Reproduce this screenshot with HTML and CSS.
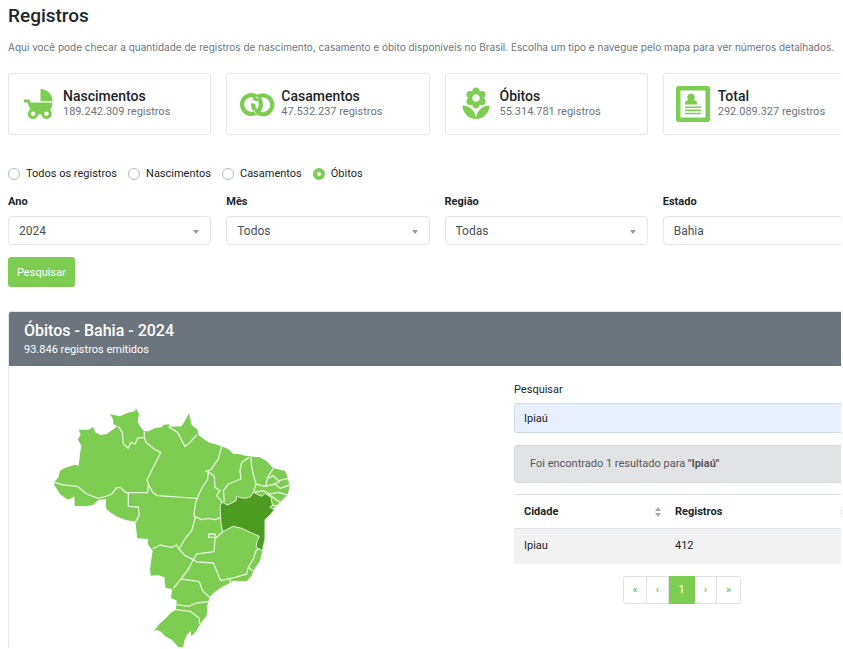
FILE: index.html
```html
<!DOCTYPE html>
<html lang="pt-BR">
<head>
<meta charset="utf-8">
<title>Registros</title>
<link rel="stylesheet" href="styles.css">
</head>
<body>
<main class="page">
<div class="content">
  <h1>Registros</h1>
  <p class="intro">Aqui você pode checar a quantidade de registros de nascimento, casamento e óbito disponíveis no Brasil. Escolha um tipo e navegue pelo mapa para ver números detalhados.</p>

  <section class="grid cards">
    <article class="card">
      <svg class="icon" viewBox="0 0 24 24"><path d="M13 2v8h8c0-4.42-3.580-8-8-8zm6.320 13.890C20.370 14.540 21 12.840 21 11H6.440l-.95-2H2v2h2.220s1.890 4.070 2.120 4.420c-1.100.590-1.840 1.750-1.840 3.080C4.500 20.430 6.070 22 8 22c1.760 0 3.220-1.300 3.460-3h2.080c.24 1.700 1.700 3 3.460 3 1.930 0 3.500-1.570 3.500-3.500 0-1.040-.46-1.970-1.180-2.610zM8 20c-.83 0-1.500-.67-1.500-1.500S7.170 17 8 17s1.500.67 1.500 1.500S8.830 20 8 20zm9 0c-.83 0-1.500-.67-1.500-1.500S16.170 17 17 17s1.500.67 1.500 1.500S17.830 20 17 20z"/></svg>
      <div><h2>Nascimentos</h2><p>189.242.309 registros</p></div>
    </article>
    <article class="card">
      <svg class="icon" viewBox="0 0 36 36"><g fill="none" stroke="#7ccd52" stroke-width="4.200"><circle cx="12.500" cy="18.500" r="9.400"/><path d="M18 26.200A9.400 9.400 0 1 0 15.500 14.500"/><path d="M14.200 17.500a9.400 9.400 0 0 0 3.300 8.300"/></g><path fill="none" stroke="#fff" stroke-width="1" d="M16.800 10.200l2.500 2.800M14.200 24l3 3.500"/></svg>
      <div><h2>Casamentos</h2><p>47.532.237 registros</p></div>
    </article>
    <article class="card">
      <svg class="icon" viewBox="0 0 24 24"><path d="M12 22c4.970 0 9-4.030 9-9-4.970 0-9 4.030-9 9zM5.600 10.250c0 1.380 1.120 2.500 2.500 2.500.53 0 1.010-.16 1.420-.44l-.02.19c0 1.380 1.120 2.500 2.500 2.500s2.500-1.120 2.500-2.500l-.02-.19c.4.280.89.440 1.420.440 1.380 0 2.500-1.120 2.500-2.500 0-1-.59-1.850-1.430-2.250.84-.4 1.430-1.250 1.430-2.250 0-1.380-1.120-2.500-2.500-2.500-.53 0-1.010.16-1.420.440l.02-.19C14.500 2.120 13.380 1 12 1S9.500 2.120 9.500 3.500l.02.19c-.4-.28-.89-.44-1.420-.44-1.380 0-2.500 1.120-2.500 2.500 0 1 .59 1.850 1.430 2.250-.84.400-1.430 1.250-1.430 2.250zM12 5.500c1.380 0 2.500 1.120 2.500 2.500s-1.120 2.500-2.500 2.500S9.500 9.380 9.500 8s1.120-2.500 2.500-2.500zM3 13c0 4.970 4.030 9 9 9 0-4.970-4.030-9-9-9z"/></svg>
      <div><h2>Óbitos</h2><p>55.314.781 registros</p></div>
    </article>
    <article class="card">
      <svg class="icon" viewBox="0 0 36 36"><path fill-rule="evenodd" d="M2.500 0h29A2.500 2.500 0 0 1 34 2.500v31a2.500 2.500 0 0 1-2.500 2.500h-29A2.500 2.500 0 0 1 0 33.500v-31A2.500 2.500 0 0 1 2.500 0zM4.500 4.500v27h25v-27zM9 20.500h16v1.600H9zM9 23.600h16v1.600H9zM9 26.700h16v1.600H9zM9 18.500v-1.700c0-2 1.700-2.800 3.600-2.800a3.700 3.700 0 1 1 4.800 0c1.900 0 3.600.8 3.600 2.800v1.700z"/></svg>
      <div><h2>Total</h2><p>292.089.327 registros</p></div>
    </article>
  </section>

  <form class="filters">
    <fieldset class="types">
      <label><input type="radio" name="tipo">Todos os registros</label>
      <label><input type="radio" name="tipo">Nascimentos</label>
      <label><input type="radio" name="tipo">Casamentos</label>
      <label><input type="radio" name="tipo" checked>Óbitos</label>
    </fieldset>
    <div class="grid">
      <div class="field"><label for="ano">Ano</label><div class="select"><select id="ano"><option>2024</option></select></div></div>
      <div class="field"><label for="mes">Mês</label><div class="select"><select id="mes"><option>Todos</option></select></div></div>
      <div class="field"><label for="regiao">Região</label><div class="select"><select id="regiao"><option>Todas</option></select></div></div>
      <div class="field"><label for="estado">Estado</label><div class="select"><select id="estado"><option>Bahia</option></select></div></div>
    </div>
    <button class="submit" type="button">Pesquisar</button>
  </form>

  <section class="panel">
    <header class="panel-head">
      <h2>Óbitos - Bahia - 2024</h2>
      <p>93.846 registros emitidos</p>
    </header>
    <div class="panel-body">
      <svg class="map" viewBox="0 0 735 735" role="img" aria-label="Mapa do Brasil">
        <path class="land" d="M13 235L25 220 30 200 42 193 55 188 75 182 86 185 90 150 94 125 83 105 92 93 86 77 115 77 130 69 135 85 152 93 170 90 188 77 202 67 190 60 189 45 180 31 210 37 232 27 255 21 258 13 267 30 263 53 270 67 282 82 295 82 315 72 335 70 340 62 357 61 360 68 395 67 405 50 417 28 425 63 443 77 445 93 475 115 510 125 535 135 550 150 565 150 585 155 630 160 650 172 670 193 705 200 713 220 719 247 713 273 690 295 670 315 663 330 645 347 645 405 637 440 630 470 610 500 605 515 590 532 550 530 515 550 495 563 478 580 472 605 470 635 450 660 440 680 424 697 422 682 412 690 403 710 398 735 385 733 382 725 365 707 345 697 335 685 322 678 312 680 328 660 345 645 362 627 378 617 380 590 363 582 367 555 347 552 343 520 325 514 302 515 300 495 308 440 293 420 295 405 262 403 256 353 228 348 205 340 180 325 168 313 168 285 145 288 130 302 110 307 74 305 73 277 60 285 50 285 30 270 13 243z"/>
        <path class="bahia" d="M517 295L533 303 558 290 560 277 580 283 600 280 610 265 635 277 645 268 663 280 667 303 660 310 673 317 663 330 645 347 645 405 637 440 618 430 622 410 628 397 605 387 575 373 550 367 518 383 513 360 510 305z"/>
        <path class="borders" d="M13 235L40 243 82 247 110 270 145 283 168 277 185 270 200 251 212 251 228 266 293 266 295 240 291 228 332 145 315 137 288 115 283 100 263 102 255 120 242 115 235 133 220 120 217 85 205 67M283 100V83M295 240L308 265 322 275 440 283M235 266V307L265 309 267 335 255 357M355 68L383 85 405 128 420 115 440 93M515 127L505 165 483 197 467 203 475 203 473 225 457 250 445 275 437 295 432 330 435 345 425 380 405 405 387 435M475 203L493 217 495 250 510 260 500 275 517 295M597 160L575 175 570 200 573 225 535 240 520 260 523 293M603 160L605 190 615 230 618 240 610 265 640 260 660 270 685 265 713 273M670 193L653 220 647 247M618 240L645 247 675 240 690 253 719 243M650 225L670 215 685 230 715 223M673 240L690 232M655 270L690 295M667 303L680 307M433 337L455 347 475 343 495 347 513 340M308 435L330 423 365 430 380 423 387 435 405 455 430 467 440 450 492 443 495 405 518 383M476 390h19v10h-19zM430 467L440 474 490 477 500 500 512 530 555 520 590 510 595 490 610 465 618 440 628 433M595 490L608 500M538 525L542 535M430 467L415 495 393 525 370 553M393 525L448 533 458 560 478 580M380 602L415 607 440 597 475 593M378 617L420 622 448 643 448 660"/>
      </svg>
      <div class="results">
        <label class="search-label" for="busca">Pesquisar</label>
        <input class="search" id="busca" type="text" value="Ipiaú">
        <p class="notice">Foi encontrado 1 resultado para <strong>"Ipiaú"</strong></p>
        <table>
          <thead><tr>
            <th>Cidade<svg class="sort" viewBox="0 0 6 10"><path d="M3 0l3 4H0zM3 10l3-4H0z"/></svg></th>
            <th>Registros<svg class="sort" viewBox="0 0 6 10"><path d="M3 0l3 4H0zM3 10l3-4H0z"/></svg></th>
          </tr></thead>
          <tbody><tr><td>Ipiau</td><td>412</td></tr></tbody>
        </table>
        <nav class="pager" aria-label="Paginação">
          <a href="#">«</a><a href="#">‹</a><a class="current" href="#">1</a><a href="#">›</a><a href="#">»</a>
        </nav>
      </div>
    </div>
  </section>
</div>
</main>
</body>
</html>
```
FILE: styles.css
```css
* { box-sizing: border-box; }
body {
  margin: 0;
  background: #fff;
  color: #212529;
  font: 12px/16px Roboto, "Liberation Sans", sans-serif;
}
h1, h2, p { margin: 0; }
.page {
  height: calc(100vh - 2px);
  margin-right: 2px;
  padding-left: 8px;
  overflow: hidden;
}
/* The content runs past the right edge of the window. */
.content { width: calc(100% + 25px); }
h1 { padding-top: 4px; font-size: 19px; line-height: 24px; font-weight: 500; }
.intro { margin-top: 11px; color: #6c757d; font-family: Inter, Roboto, sans-serif; font-size: 10px; white-space: nowrap; }
.grid { display: grid; grid-template-columns: repeat(4, 1fr); gap: 15px; }
.cards { margin-top: 18px; }
.card {
  display: flex;
  align-items: center;
  gap: 6px;
  height: 62px;
  padding: 0 12px;
  border: 1px solid #e6e7e8;
  border-radius: 3px;
}
.icon { width: 36px; height: 36px; fill: #7ccd52; }
.card h2 { font-size: 14px; line-height: 16px; font-weight: 500; }
.card p { color: #6c757d; font-size: 11px; }
.types {
  display: flex;
  gap: 11px;
  margin: 31px 0 12px;
  padding: 0;
  border: 0;
  font-size: 11px;
}
.types label { display: flex; align-items: center; gap: 6px; }
.types input {
  appearance: none;
  width: 12px;
  height: 12px;
  margin: 0;
  border: 1px solid #b4bac0;
  border-radius: 50%;
}
.types input:checked { border: 4px solid #7ccd52; }
.field label { display: block; font-size: 11px; font-weight: 700; }
.select { position: relative; margin-top: 6px; }
.select::after {
  content: "";
  position: absolute;
  top: 14px;
  right: 12px;
  border: 3px solid transparent;
  border-top: 4px solid #999;
  border-bottom: 0;
}
select {
  appearance: none;
  display: block;
  width: 100%;
  height: 29px;
  padding: 0 10px;
  border: 1px solid #e4e5e7;
  border-radius: 4px;
  background: #fff;
  color: #495057;
  font: inherit;
}
.submit {
  display: block;
  height: 30px;
  margin-top: 12px;
  padding: 0 9px;
  border: 0;
  border-radius: 3px;
  background: #7ccd52;
  color: #fff;
  font: 11px Roboto, sans-serif;
}
.panel { margin-top: 24px; border: 1px solid #e4e7ea; border-radius: 3px; }
.panel-head { padding: 8px 15px; border-radius: 2px 2px 0 0; background: #6c757d; color: #fff; }
.panel-head h2 { font-size: 16px; line-height: 22px; font-weight: 500; }
.panel-head p { font-size: 11px; font-weight: 400; }
.panel-body { display: grid; grid-template-columns: 490px 1fr; padding: 16px 15px; }
.map { width: 245px; height: 245px; margin: 22px 0 0 26px; }
.land { fill: #7ccd52; }
.bahia { fill: #4b9c21; stroke: #e2f4d8; stroke-width: 3; }
.borders { fill: none; stroke: #e2f4d8; stroke-width: 4; stroke-linejoin: round; }
.search-label { display: block; font-size: 11px; }
.search {
  width: 100%;
  height: 30px;
  margin-top: 5px;
  padding: 0 9px;
  border: 1px solid #d0d8e4;
  border-radius: 3px;
  background: #e8f0fe;
  color: #212529;
  font: 11px Roboto, sans-serif;
}
.notice {
  margin-top: 12px;
  padding: 10px 15px;
  border: 1px solid #d8dadd;
  border-radius: 3px;
  background: #e2e3e5;
  color: #55595d;
  font-size: 11px;
}
table { width: 100%; margin-top: 11px; border-collapse: collapse; table-layout: fixed; font-size: 11px; }
th, td { height: 34px; padding: 0 10px; text-align: left; }
td { height: 35px; }
th { border-top: 1px solid #dee2e6; border-bottom: 1px solid #dee2e6; font-weight: 700; }
td { background: #f2f2f2; }
th:first-child { width: 151px; }
.sort { float: right; width: 6px; height: 10px; margin-top: 3px; margin-right: -6px; fill: #aaa; }
.pager { display: flex; justify-content: center; margin-top: 12px; font-size: 11px; }
.pager a {
  display: grid;
  place-items: center;
  width: 22px;
  height: 28px;
  border: 1px solid #dee2e6;
  border-left: 0;
  color: #67b23f;
  text-decoration: none;
}
.pager a:first-child { width: 24px; border-left: 1px solid #dee2e6; border-radius: 3px 0 0 3px; }
.pager a:last-child { width: 24px; border-radius: 0 3px 3px 0; }
.pager .current { width: 26px; border-color: #7ccd52; background: #7ccd52; color: #fff; }
```
